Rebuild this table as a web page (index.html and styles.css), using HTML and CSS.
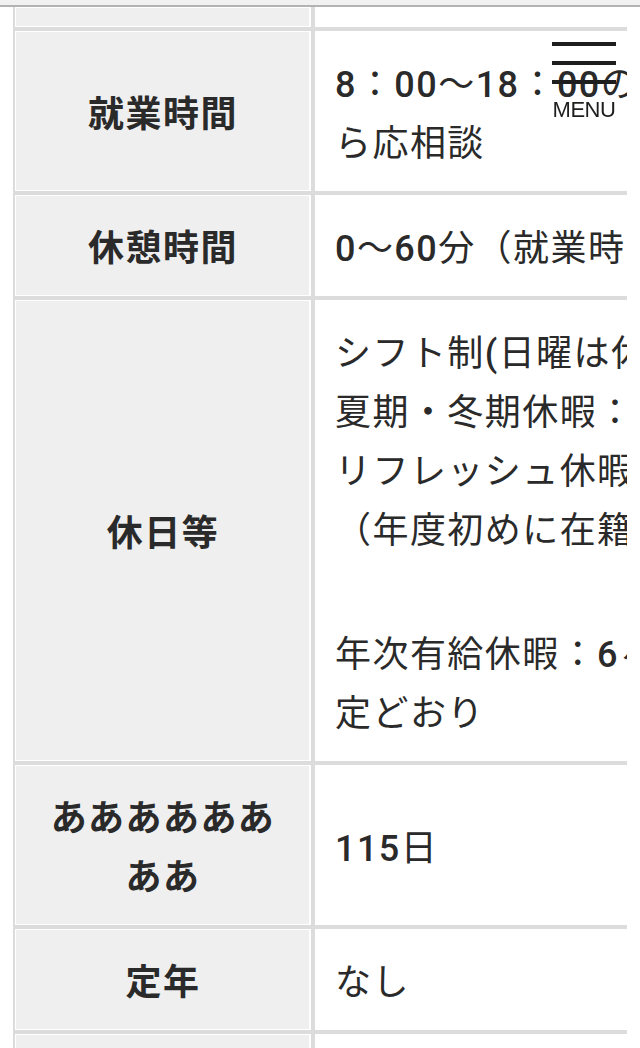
FILE: index.html
```html
<!DOCTYPE html>
<html lang="ja">
<head>
<meta charset="utf-8">
<title>募集要項</title>
<link rel="stylesheet" href="styles.css">
</head>
<body>
<header class="topbar"></header>
<button class="menu-btn" type="button">
  <span class="menu-bar"></span>
  <span class="menu-bar"></span>
  <span class="menu-bar"></span>
  <span class="menu-label">MENU</span>
</button>
<div class="table-wrap">
  <table class="info-table">
    <colgroup>
      <col class="col-head">
      <col class="col-body">
    </colgroup>
    <tbody>
      <tr class="stub"><th></th><td></td></tr>
      <tr>
        <th>就業時間</th>
        <td><span class="num">8</span>：<span class="num">00</span>〜<span class="num">18</span>：<span class="num">00</span>の間で、勤務時間はご希望に応じなが<br>ら応相談</td>
      </tr>
      <tr>
        <th>休憩時間</th>
        <td><span class="num">0</span>〜<span class="num">60</span>分（就業時間により変動）</td>
      </tr>
      <tr>
        <th>休日等</th>
        <td>
          <div class="para">シフト制<span class="num">(</span>日曜は休み<span class="num">)</span><br>夏期・冬期休暇：各<span class="num">3</span>日<br>リフレッシュ休暇：年<span class="num">5</span>日<br>（年度初めに在籍している方）</div>
          <div class="para">年次有給休暇：<span class="num">6</span>ヶ月経過後に法<br>定どおり</div>
        </td>
      </tr>
      <tr>
        <th>ああああああああ</th>
        <td><span class="num">115</span>日</td>
      </tr>
      <tr>
        <th>定年</th>
        <td>なし</td>
      </tr>
      <tr>
        <th>福利厚生</th>
        <td>各種社会保険完備</td>
      </tr>
    </tbody>
  </table>
</div>
</body>
</html>
```

FILE: styles.css
```css
html, body {
  margin: 0;
  padding: 0;
}

body {
  background: #ffffff;
  color: #2a2a2a;
  font-family: "Noto Sans CJK JP", sans-serif;
  overflow-x: hidden;
}

.topbar {
  height: 5px;
  background: #f1f1f1;
  border-bottom: 2px solid #b3b3b3;
}

.menu-btn {
  position: fixed;
  top: 42px;
  right: 24px;
  width: 64px;
  margin: 0;
  padding: 0;
  border: 0;
  background: none;
  display: flex;
  flex-direction: column;
  align-items: center;
  gap: 15px;
  cursor: pointer;
}

.menu-bar {
  display: block;
  width: 64px;
  height: 4px;
  background: #1e1e1e;
}

.menu-label {
  margin-top: 0;
  font-family: "Liberation Sans", Arial, sans-serif;
  font-size: 22px;
  line-height: 22px;
  color: #1e1e1e;
  letter-spacing: -0.5px;
}

.table-wrap {
  margin-left: 13px;
  width: 614px;
  overflow: hidden;
}

.info-table {
  width: 960px;
  table-layout: fixed;
  border-collapse: separate;
  border-spacing: 0;
  border-left: 2px solid #dcdcdc;
  font-size: 36px;
  line-height: 59px;
  letter-spacing: 0.04em;
}

.col-head {
  width: 300px;
}

.info-table th,
.info-table td {
  border-bottom: 4px solid #dcdcdc;
  padding: 21px 20px 21px;
  vertical-align: middle;
}

.info-table th {
  background: #efefef;
  border-right: 4px solid #dcdcdc;
  box-shadow: inset 1px 1px 0 #ffffff, inset -2px -1px 0 #ffffff;
  font-weight: 700;
  text-align: center;
}

.info-table td {
  text-align: left;
  white-space: nowrap;
  overflow: hidden;
  font-weight: 400;
}

.info-table .stub th,
.info-table .stub td {
  height: 20px;
  padding: 0;
}

.para + .para {
  margin-top: 65px;
}

.num {
  font-family: Roboto, "Liberation Sans", sans-serif;
  font-weight: 500;
  line-height: 1;
}
```
